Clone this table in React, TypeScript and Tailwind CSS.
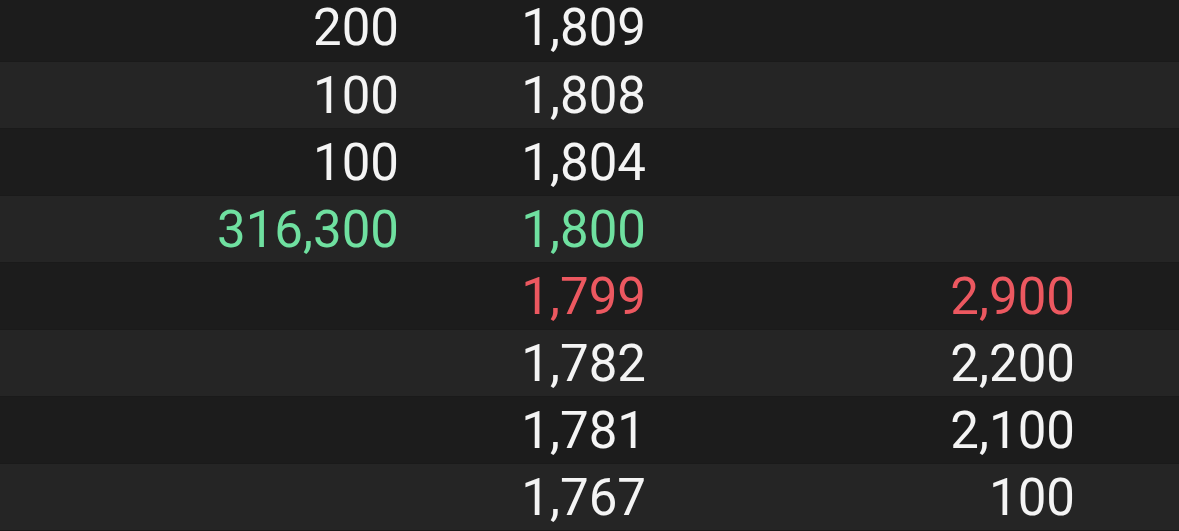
const rows = [
  { qty: "200", price: "1,809", ask: "", tone: "plain" },
  { qty: "100", price: "1,808", ask: "", tone: "plain" },
  { qty: "100", price: "1,804", ask: "", tone: "plain" },
  { qty: "316,300", price: "1,800", ask: "", tone: "buy" },
  { qty: "", price: "1,799", ask: "2,900", tone: "sell" },
  { qty: "", price: "1,782", ask: "2,200", tone: "plain" },
  { qty: "", price: "1,781", ask: "2,100", tone: "plain" },
  { qty: "", price: "1,767", ask: "100", tone: "plain" },
];

const toneClass: Record<string, string> = {
  plain: "text-[#f4f4f4]",
  buy: "text-[#6fe0a0]",
  sell: "text-[#ec5860]",
};

export default function App() {
  return (
    <div
      className="w-[1179px] h-[531px] overflow-hidden bg-[#1c1c1c]"
      style={{ fontFamily: "Roboto, 'Noto Sans', sans-serif" }}
    >
      {rows.map((row, i) => (
        <div
          key={i}
          className={`flex items-center text-[51px] leading-none border-b border-[#1a1a1a] ${
            i === 0 ? "h-[62px] pb-[7px]" : "h-[67px]"
          } ${i % 2 === 1 ? "bg-[#252525]" : "bg-[#1c1c1c]"} ${toneClass[row.tone]}`}
        >
          <div className="w-[399px] text-right">{row.qty}</div>
          <div className="w-[247px] text-right">{row.price}</div>
          <div className="w-[429px] text-right">{row.ask}</div>
        </div>
      ))}
    </div>
  );
}
